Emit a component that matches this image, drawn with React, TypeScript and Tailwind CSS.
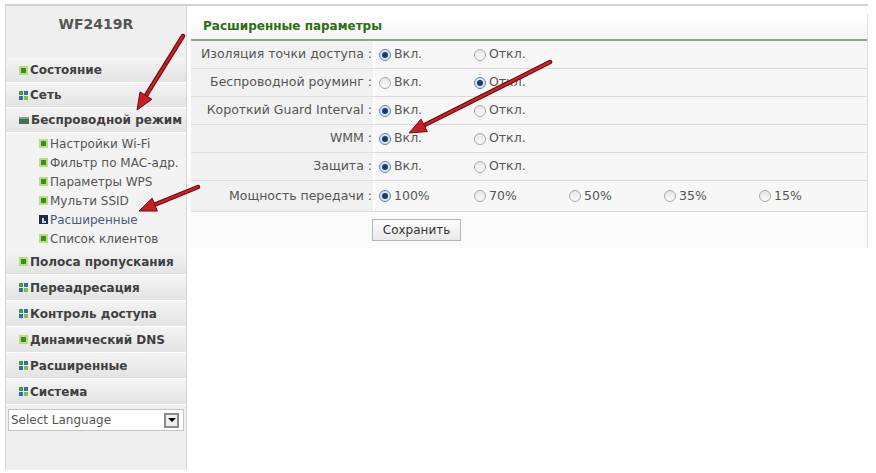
import React from "react";

type Icon = "sq" | "grid" | "bar" | "sel";

function MenuIcon({ kind }: { kind: Icon }) {
  if (kind === "grid") {
    return (
      <span className="grid grid-cols-2 gap-[1px] w-[9px] h-[9px] shrink-0">
        <span className="bg-[#3f9a3a]" />
        <span className="bg-[#2f6fa8]" />
        <span className="bg-[#2f6fa8]" />
        <span className="bg-[#7cc24a]" />
      </span>
    );
  }
  if (kind === "bar") {
    return <span className="w-[10px] h-[7px] shrink-0 bg-[#3f6f5c] border-t-2 border-[#7aa38e]" />;
  }
  if (kind === "sel") {
    return (
      <span className="w-[9px] h-[9px] shrink-0 bg-[#1d2b48] flex items-end justify-center pb-[1px]">
        <span className="w-[4px] h-[5px] border-l-2 border-b-2 border-[#c9d3e6]" />
      </span>
    );
  }
  return (
    <span className="w-[9px] h-[9px] shrink-0 bg-[#b6e07c] flex items-center justify-center">
      <span className="w-[5px] h-[5px] bg-[#3d8b2a]" />
    </span>
  );
}

const topItems: { label: string; icon: Icon }[] = [
  { label: "Состояние", icon: "sq" },
  { label: "Сеть", icon: "grid" },
  { label: "Беспроводной режим", icon: "bar" },
];

const subItems: { label: string; icon: Icon }[] = [
  { label: "Настройки Wi-Fi", icon: "sq" },
  { label: "Фильтр по МАС-адр.", icon: "sq" },
  { label: "Параметры WPS", icon: "sq" },
  { label: "Мульти SSID", icon: "sq" },
  { label: "Расширенные", icon: "sel" },
  { label: "Список клиентов", icon: "sq" },
];

const bottomItems: { label: string; icon: Icon }[] = [
  { label: "Полоса пропускания", icon: "sq" },
  { label: "Переадресация", icon: "grid" },
  { label: "Контроль доступа", icon: "grid" },
  { label: "Динамический DNS", icon: "sq" },
  { label: "Расширенные", icon: "grid" },
  { label: "Система", icon: "grid" },
];

function MainItem({ label, icon, h }: { label: string; icon: Icon; h: string }) {
  return (
    <div
      className={`${h} flex items-center gap-[2px] pl-[13px] bg-gradient-to-b from-[#f4f4f4] to-[#e3e3e3] border-b border-white text-[12px] font-bold text-[#3f3f3f] whitespace-nowrap`}
    >
      <MenuIcon kind={icon} />
      <span>{label}</span>
    </div>
  );
}

function Radio({ on }: { on: boolean }) {
  return (
    <span
      className={`w-[12px] h-[12px] rounded-full shrink-0 border flex items-center justify-center ${
        on ? "border-[#5b86b8] bg-[#d7e6f5]" : "border-[#a9a9a9] bg-gradient-to-b from-[#e6e6e6] to-[#fafafa]"
      }`}
    >
      {on && <span className="w-[6px] h-[6px] rounded-full bg-[#1f3b66]" />}
    </span>
  );
}

function Option({ label, on }: { label: string; on: boolean }) {
  return (
    <div className="w-[95px] flex items-center gap-[3px] pl-[4px]">
      <Radio on={on} />
      <span>{label}</span>
    </div>
  );
}

const rows: { label: string; opts: string[]; sel: number; h: string }[] = [
  { label: "Изоляция точки доступа :", opts: ["Вкл.", "Откл."], sel: 0, h: "h-[28px]" },
  { label: "Беспроводной роуминг :", opts: ["Вкл.", "Откл."], sel: 1, h: "h-[28px]" },
  { label: "Короткий Guard Interval :", opts: ["Вкл.", "Откл."], sel: 0, h: "h-[28px]" },
  { label: "WMM :", opts: ["Вкл.", "Откл."], sel: 0, h: "h-[28px]" },
  { label: "Защита :", opts: ["Вкл.", "Откл."], sel: 0, h: "h-[28px]" },
  { label: "Мощность передачи :", opts: ["100%", "70%", "50%", "35%", "15%"], sel: 0, h: "h-[31px]" },
];

function Arrow({ x1, y1, x2, y2 }: { x1: number; y1: number; x2: number; y2: number }) {
  const a = Math.atan2(y2 - y1, x2 - x1);
  const len = 17;
  const w = 7;
  const bx = x2 - Math.cos(a) * len;
  const by = y2 - Math.sin(a) * len;
  const px = -Math.sin(a) * w;
  const py = Math.cos(a) * w;
  return (
    <g>
      <line x1={x1} y1={y1} x2={bx} y2={by} stroke="#6e0e0e" strokeWidth={4.5} strokeLinecap="round" />
      <line x1={x1} y1={y1} x2={bx} y2={by} stroke="#d2232a" strokeWidth={2} strokeLinecap="round" />
      <polygon points={`${x2},${y2} ${bx + px},${by + py} ${bx - px},${by - py}`} fill="#c81d25" stroke="#6e0e0e" strokeWidth={1} />
    </g>
  );
}

export default function App() {
  return (
    <div className="relative w-[876px] h-[473px] bg-white overflow-hidden font-['DejaVu_Sans',sans-serif] text-[12px] text-[#555]">
      <div className="flex ml-[5px] mr-[8px] mt-[4px] h-[466px] border-t-2 border-[#d2d2d2]">
        <aside className="w-[182px] shrink-0 bg-[#efefef] border-l border-r border-[#d6d6d6] flex flex-col">
          <div className="h-[52px] pt-[8px] text-center text-[14px] font-bold text-[#555]">WF2419R</div>
          {topItems.map((it) => (
            <MainItem key={it.label} label={it.label} icon={it.icon} h="h-[25px]" />
          ))}
          <div className="flex flex-col pl-[33px] py-[1px] bg-[#f3f3f3]">
            {subItems.map((it) => (
              <div key={it.label} className="h-[19px] flex items-center gap-[2px] whitespace-nowrap text-[#555]">
                <MenuIcon kind={it.icon} />
                <span className={it.icon === "sel" ? "text-[#4d5a80]" : ""}>{it.label}</span>
              </div>
            ))}
          </div>
          {bottomItems.map((it) => (
            <MainItem key={it.label + it.icon} label={it.label} icon={it.icon} h="h-[26px]" />
          ))}
          <div className="mt-[4px] mx-[2px] h-[22px] bg-white border border-[#c4c4c4] flex items-center justify-between pl-[2px] pr-[4px] text-[#555]">
            <span>Select Language</span>
            <span className="w-[15px] h-[15px] border-2 border-[#8a8a8a] bg-[#eee] flex items-center justify-center">
              <span className="w-0 h-0 border-l-[4px] border-r-[4px] border-t-[4px] border-l-transparent border-r-transparent border-t-black" />
            </span>
          </div>
        </aside>

        <main className="flex-1 pl-[4px] pt-[7px] text-[12.5px]">
          <div className="border-r border-[#e2e2e2]">
            <div className="h-[28px] flex items-center pl-[12px] bg-gradient-to-b from-white to-[#f6f6f6] border-b-2 border-[#8fa386] text-[12px] font-bold text-[#2b6e12]">
              Расширенные параметры
            </div>
            {rows.map((r) => (
              <div key={r.label} className={`${r.h} flex border-b border-[#dadada]`}>
                <div className="w-[184px] shrink-0 flex items-center justify-end pr-[1px] bg-[#f1f1f1] border-r-2 border-white whitespace-nowrap">
                  {r.label}
                </div>
                <div className="flex-1 flex items-center bg-[#f7f7f7]">
                  {r.opts.map((o, i) => (
                    <Option key={o} label={o} on={i === r.sel} />
                  ))}
                </div>
              </div>
            ))}
            <div className="h-[36px] flex items-center pl-[181px] bg-[#fafafa]">
              <button className="w-[89px] h-[22px] border border-[#b4b4b4] bg-gradient-to-b from-[#fdfdfd] to-[#e9e9e9] text-[12px] text-[#333]">
                Сохранить
              </button>
            </div>
          </div>
        </main>
      </div>

      <svg className="absolute inset-0 pointer-events-none" width={876} height={473}>
        <Arrow x1={183} y1={36} x2={137} y2={110} />
        <Arrow x1={198} y1={187} x2={139} y2={211} />
        <Arrow x1={550} y1={62} x2={409} y2={133} />
      </svg>
    </div>
  );
}
